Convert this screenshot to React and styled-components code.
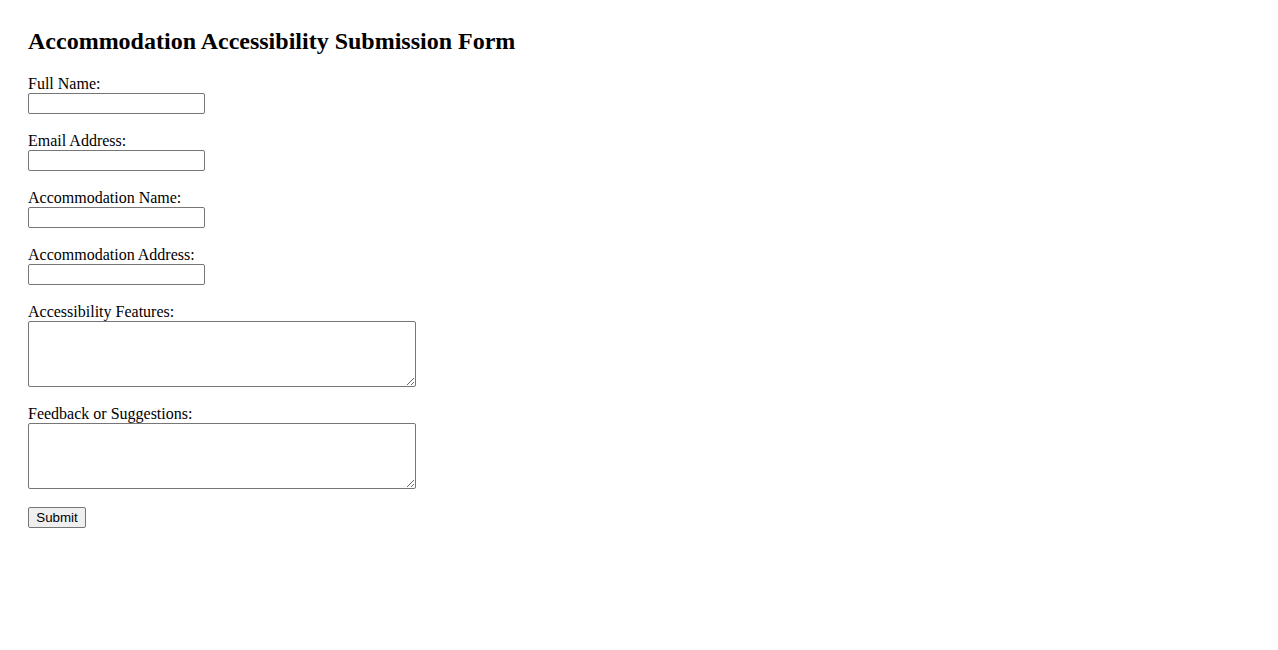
import React from "react";
import styled, { createGlobalStyle } from "styled-components";

const GlobalStyle = createGlobalStyle`
  html, body { background: #ffffff; }
  body {
    margin: 8px;
    font-family: "Liberation Serif", "Times New Roman", serif;
    font-size: 16px;
    color: #000000;
  }
`;

const Page = styled.div`
  padding: 20px;
`;

const Title = styled.h2`
  margin: 0 0 20px;
  font-size: 24px;
  font-weight: bold;
  line-height: 27px;
`;

const Form = styled.form`
  display: flex;
  flex-direction: column;
  align-items: flex-start;
`;

const Field = styled.div`
  display: flex;
  flex-direction: column;
  align-items: flex-start;
  margin-bottom: 18px;
`;

const Label = styled.label`
  display: block;
  line-height: 18px;
`;

const TextInput = styled.input`
  box-sizing: border-box;
  width: 177px;
  height: 21px;
  margin: 0;
  padding: 1px 2px;
  border: 1px solid #767676;
  border-radius: 2px;
  font-family: "Liberation Sans", Arial, sans-serif;
  font-size: 13.33px;
  background: #ffffff;
`;

const TextArea = styled.textarea`
  box-sizing: border-box;
  width: 388px;
  height: 66px;
  margin: 0;
  padding: 2px;
  border: 1px solid #767676;
  border-radius: 2px;
  font-family: "Liberation Mono", monospace;
  font-size: 13.33px;
  background: #ffffff;
  resize: both;
`;

const Button = styled.button`
  box-sizing: border-box;
  height: 21px;
  width: 58px;
  padding: 1px 6px;
  margin: 0;
  border: 1px solid #767676;
  border-radius: 2px;
  background: #efefef;
  font-family: "Liberation Sans", Arial, sans-serif;
  font-size: 13.33px;
  color: #000000;
`;

const fields = [
  { id: "name", label: "Full Name:", type: "text" },
  { id: "email", label: "Email Address:", type: "email" },
  { id: "accname", label: "Accommodation Name:", type: "text" },
  { id: "accaddr", label: "Accommodation Address:", type: "text" },
];

const areas = [
  { id: "features", label: "Accessibility Features:" },
  { id: "feedback", label: "Feedback or Suggestions:" },
];

export default function App() {
  return (
    <>
      <GlobalStyle />
      <Page>
        <Title>Accommodation Accessibility Submission Form</Title>
        <Form onSubmit={(e) => e.preventDefault()}>
          {fields.map((f) => (
            <Field key={f.id}>
              <Label htmlFor={f.id}>{f.label}</Label>
              <TextInput id={f.id} type={f.type} />
            </Field>
          ))}
          {areas.map((a) => (
            <Field key={a.id}>
              <Label htmlFor={a.id}>{a.label}</Label>
              <TextArea id={a.id} />
            </Field>
          ))}
          <Button type="submit">Submit</Button>
        </Form>
      </Page>
    </>
  );
}
